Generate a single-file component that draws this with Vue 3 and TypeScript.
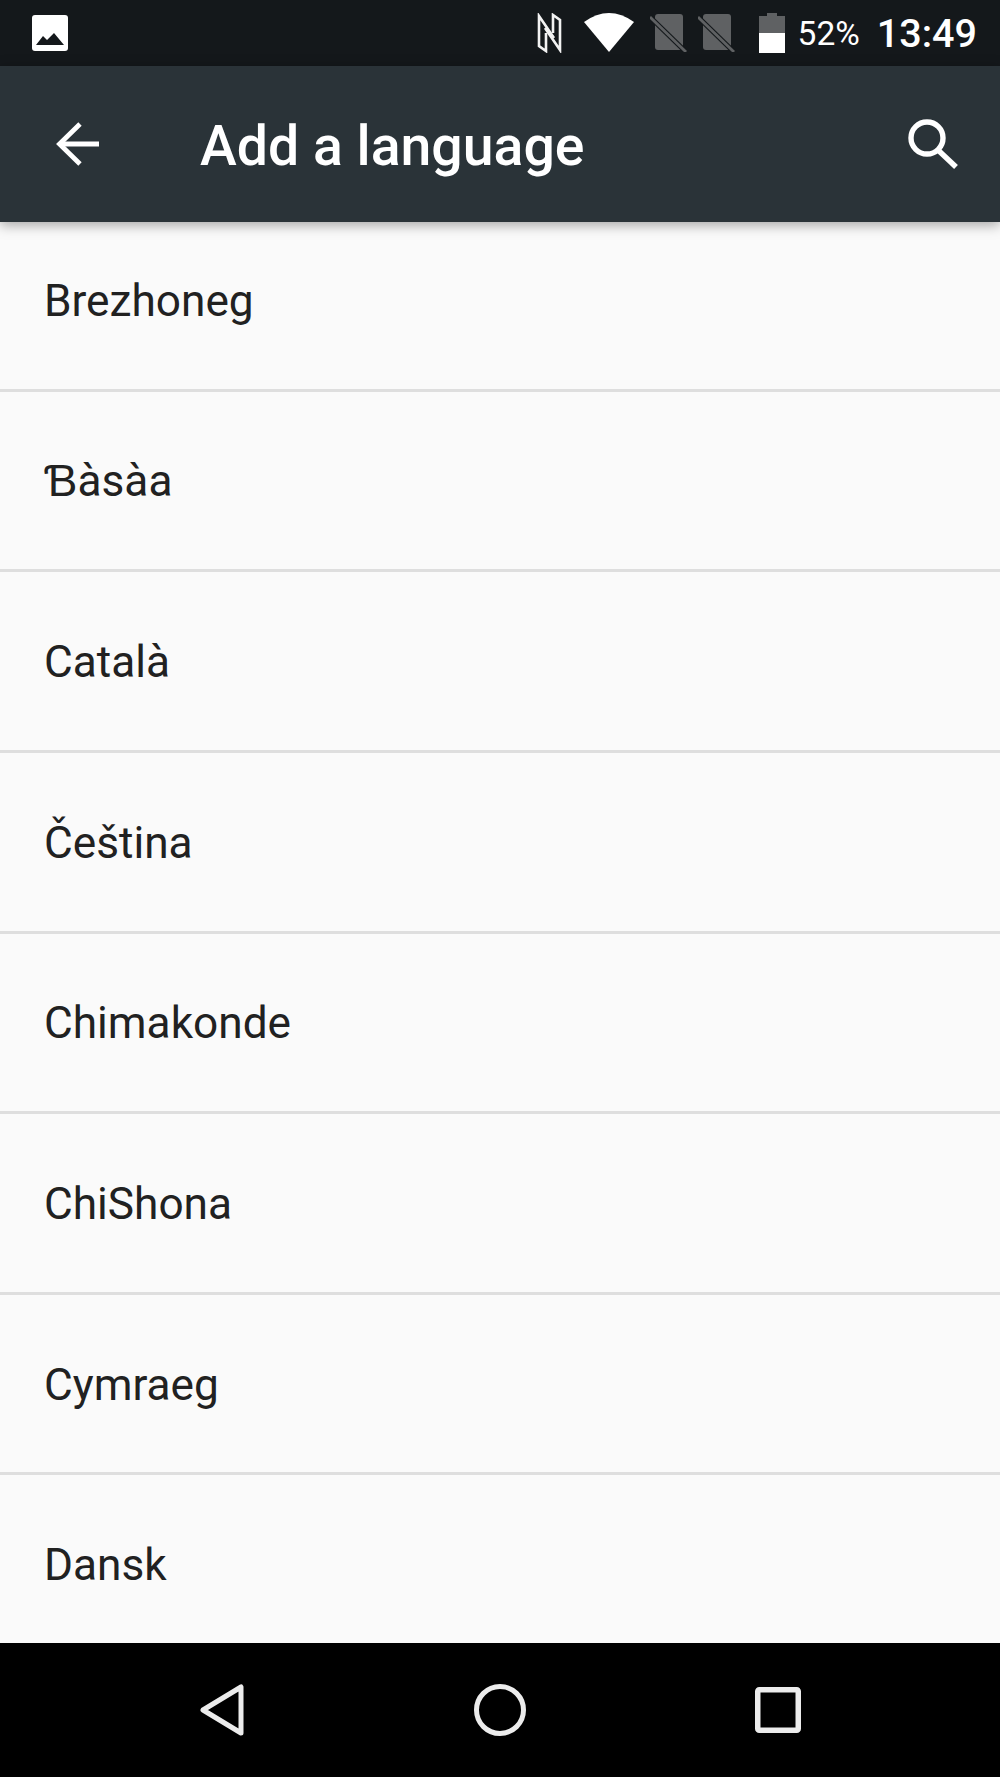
<template>
  <div class="screen">
    <div class="status-bar">
      <svg class="pic-icon" viewBox="0 0 36 36">
        <rect x="0" y="0" width="36" height="36" rx="3" fill="#fff" />
        <path d="M4 30 L11 21 L15 25 L22 18 L32 30 Z" fill="#14181b" />
      </svg>
      <div class="status-right">
        <svg class="nfc" viewBox="0 0 25 40" fill="none" stroke="#f2f2f2" stroke-width="2.6">
          <path d="M17 25 L2 3 V33 L9 38 V20" />
          <path d="M8 15 L23 37 V7 L16 2 V20" />
        </svg>
        <svg class="wifi" viewBox="0 0 50 40">
          <path d="M0 9 Q25 -9 50 9 L25 39 Z" fill="#fff" />
        </svg>
        <svg class="sim" v-for="n in 2" :key="n" viewBox="0 0 37 38">
          <path d="M5 3 Q5 0 8 0 H30 Q33 0 33 3 V36 H8 Q5 36 5 33 Z" fill="#5f6163" />
          <path d="M0 3 L36 38" stroke="#14181b" stroke-width="5" />
          <path d="M0 3 L36 38" stroke="#5f6163" stroke-width="2.8" />
        </svg>
        <svg class="battery" viewBox="0 0 26 40">
          <path d="M8 0 H18 V3 H26 V40 H0 V3 H8 Z" fill="#5f6163" />
          <rect x="0" y="20" width="26" height="20" fill="#fff" />
        </svg>
        <span class="percent">52%</span>
        <span class="clock">13:49</span>
      </div>
    </div>

    <header class="app-bar">
      <svg class="back" viewBox="0 0 43 44" fill="none" stroke="#fff" stroke-width="4.8">
        <path d="M43 22 H3" />
        <path d="M24 2 L3.5 22 L24 42" />
      </svg>
      <h1 class="title">Add a language</h1>
      <svg class="search" viewBox="0 0 50 50" fill="none" stroke="#fff" stroke-width="5.4">
        <circle cx="19" cy="19" r="16" />
        <path d="M30 31 L48 48" />
      </svg>
    </header>

    <div class="list-wrap">
      <ul class="list">
        <li v-for="lang in languages" :key="lang" class="row">{{ lang }}</li>
      </ul>
    </div>

    <nav class="nav-bar">
      <svg class="nav-back" viewBox="0 0 44 52" fill="none" stroke="#ececec" stroke-width="5" stroke-linejoin="round">
        <path d="M41 3 V49 L3 26 Z" />
      </svg>
      <svg class="nav-home" viewBox="0 0 52 52" fill="none" stroke="#ececec" stroke-width="5">
        <circle cx="26" cy="26" r="23.5" />
      </svg>
      <svg class="nav-recent" viewBox="0 0 46 46" fill="none" stroke="#ececec" stroke-width="5.5" stroke-linejoin="round">
        <rect x="2.75" y="2.75" width="40.5" height="40.5" rx="1.5" />
      </svg>
    </nav>
  </div>
</template>

<script setup lang="ts">
const languages: string[] = [
  'Brezhoneg',
  'Ɓàsàa',
  'Català',
  'Čeština',
  'Chimakonde',
  'ChiShona',
  'Cymraeg',
  'Dansk'
]
</script>

<style>
html,
body {
  margin: 0;
  background: #000;
}
</style>

<style scoped>
.screen {
  width: 1000px;
  height: 1777px;
  display: flex;
  flex-direction: column;
  overflow: hidden;
  font-family: Roboto, "Liberation Sans", sans-serif;
}

.status-bar {
  height: 66px;
  flex: none;
  background: #14181b;
  display: flex;
  align-items: center;
  justify-content: space-between;
  padding: 0 23px 0 32px;
  box-sizing: border-box;
}

.pic-icon {
  width: 36px;
  height: 36px;
}

.status-right {
  display: flex;
  align-items: center;
  color: #fff;
}

.nfc {
  width: 25px;
  height: 40px;
  margin-right: 22px;
}

.wifi {
  width: 50px;
  height: 40px;
  margin-right: 16px;
}

.sim {
  width: 37px;
  height: 38px;
  margin-right: 11px;
}

.battery {
  width: 26px;
  height: 40px;
  margin: 0 13px;
}

.percent {
  font-size: 33.5px;
  margin-right: 17px;
}

.clock {
  font-size: 39.5px;
  font-weight: 500;
}

.app-bar {
  height: 156px;
  flex: none;
  background: #2a3338;
  display: flex;
  align-items: center;
  padding: 0 42px 0 56px;
  box-sizing: border-box;
  position: relative;
  z-index: 1;
  box-shadow: 0 3px 12px rgba(0, 0, 0, 0.35);
}

.back {
  width: 43px;
  height: 44px;
}

.title {
  margin: 5px 0 0 101px;
  flex: 1;
  color: #fff;
  font-size: 55.4px;
  font-weight: 500;
}

.search {
  width: 50px;
  height: 50px;
}

.list-wrap {
  flex: 1;
  overflow: hidden;
  background: #fafafa;
}

.list {
  list-style: none;
  margin: -11px 0 0;
  padding: 0;
}

.row {
  height: 175.65px;
  padding: 2px 0 0 44px;
  display: flex;
  align-items: center;
  color: #212121;
  font-size: 44.2px;
  border-bottom: 3px solid #dedede;
}

.nav-bar {
  height: 134px;
  flex: none;
  background: #000;
  display: flex;
  align-items: center;
  justify-content: center;
}

.nav-back {
  width: 44px;
  height: 52px;
  margin-right: 230px;
}

.nav-home {
  width: 52px;
  height: 52px;
  margin-right: 229px;
}

.nav-recent {
  width: 46px;
  height: 46px;
}
</style>
